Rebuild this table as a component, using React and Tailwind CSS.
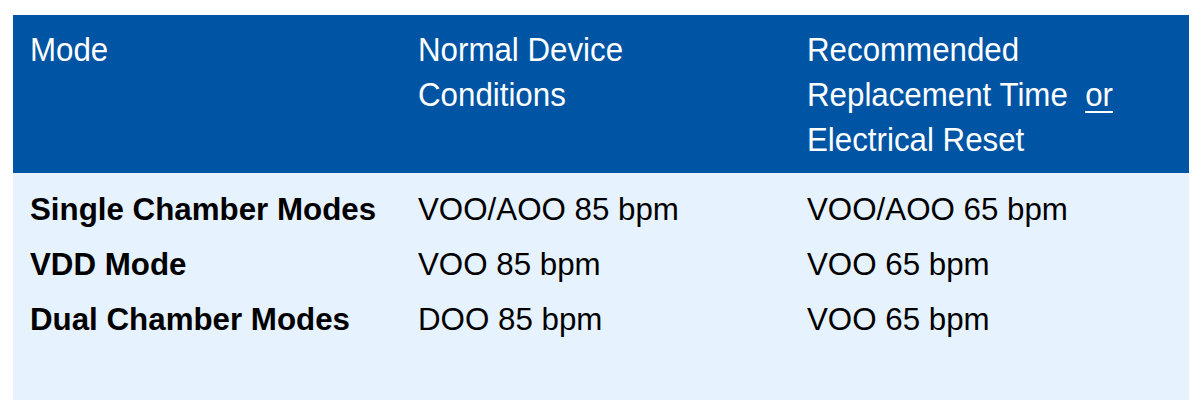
export default function App() {
  const rows = [
    ["Single Chamber Modes", "VOO/AOO 85 bpm", "VOO/AOO 65 bpm"],
    ["VDD Mode", "VOO 85 bpm", "VOO 65 bpm"],
    ["Dual Chamber Modes", "DOO 85 bpm", "VOO 65 bpm"],
  ];

  return (
    <div className="w-[1202px] h-[412px] bg-white pt-[15px] pl-[13px]" style={{ fontFamily: '"Liberation Sans", Arial, sans-serif' }}>
      <div className="w-[1176px]">
        {/* Header */}
        <div className="grid grid-cols-[388px_389px_1fr] h-[158px] bg-[#0054a4] pt-[12px] text-white text-[34px] leading-[45px]">
          <div className="pl-[17px]">
            <div className="origin-left scale-x-[0.92] whitespace-nowrap">Mode</div>
          </div>
          <div className="pl-[17px]">
            <div className="origin-left scale-x-[0.92] whitespace-nowrap">
              Normal Device
              <br />
              Conditions
            </div>
          </div>
          <div className="pl-[17px]">
            <div className="origin-left scale-x-[0.92] whitespace-nowrap">
              Recommended
              <br />
              <span className="whitespace-pre">Replacement Time  </span>
              <span className="underline underline-offset-[5px] decoration-2">or</span>
              <br />
              Electrical Reset
            </div>
          </div>
        </div>

        {/* Body */}
        <div className="h-[227px] bg-[#e6f2fd] pt-[9px] text-black text-[31.3px] leading-[55px]">
          {rows.map((r) => (
            <div key={r[0]} className="grid grid-cols-[388px_389px_1fr]">
              <div className="pl-[17px] font-bold">{r[0]}</div>
              <div className="pl-[17px]">{r[1]}</div>
              <div className="pl-[17px]">{r[2]}</div>
            </div>
          ))}
        </div>
      </div>
    </div>
  );
}
